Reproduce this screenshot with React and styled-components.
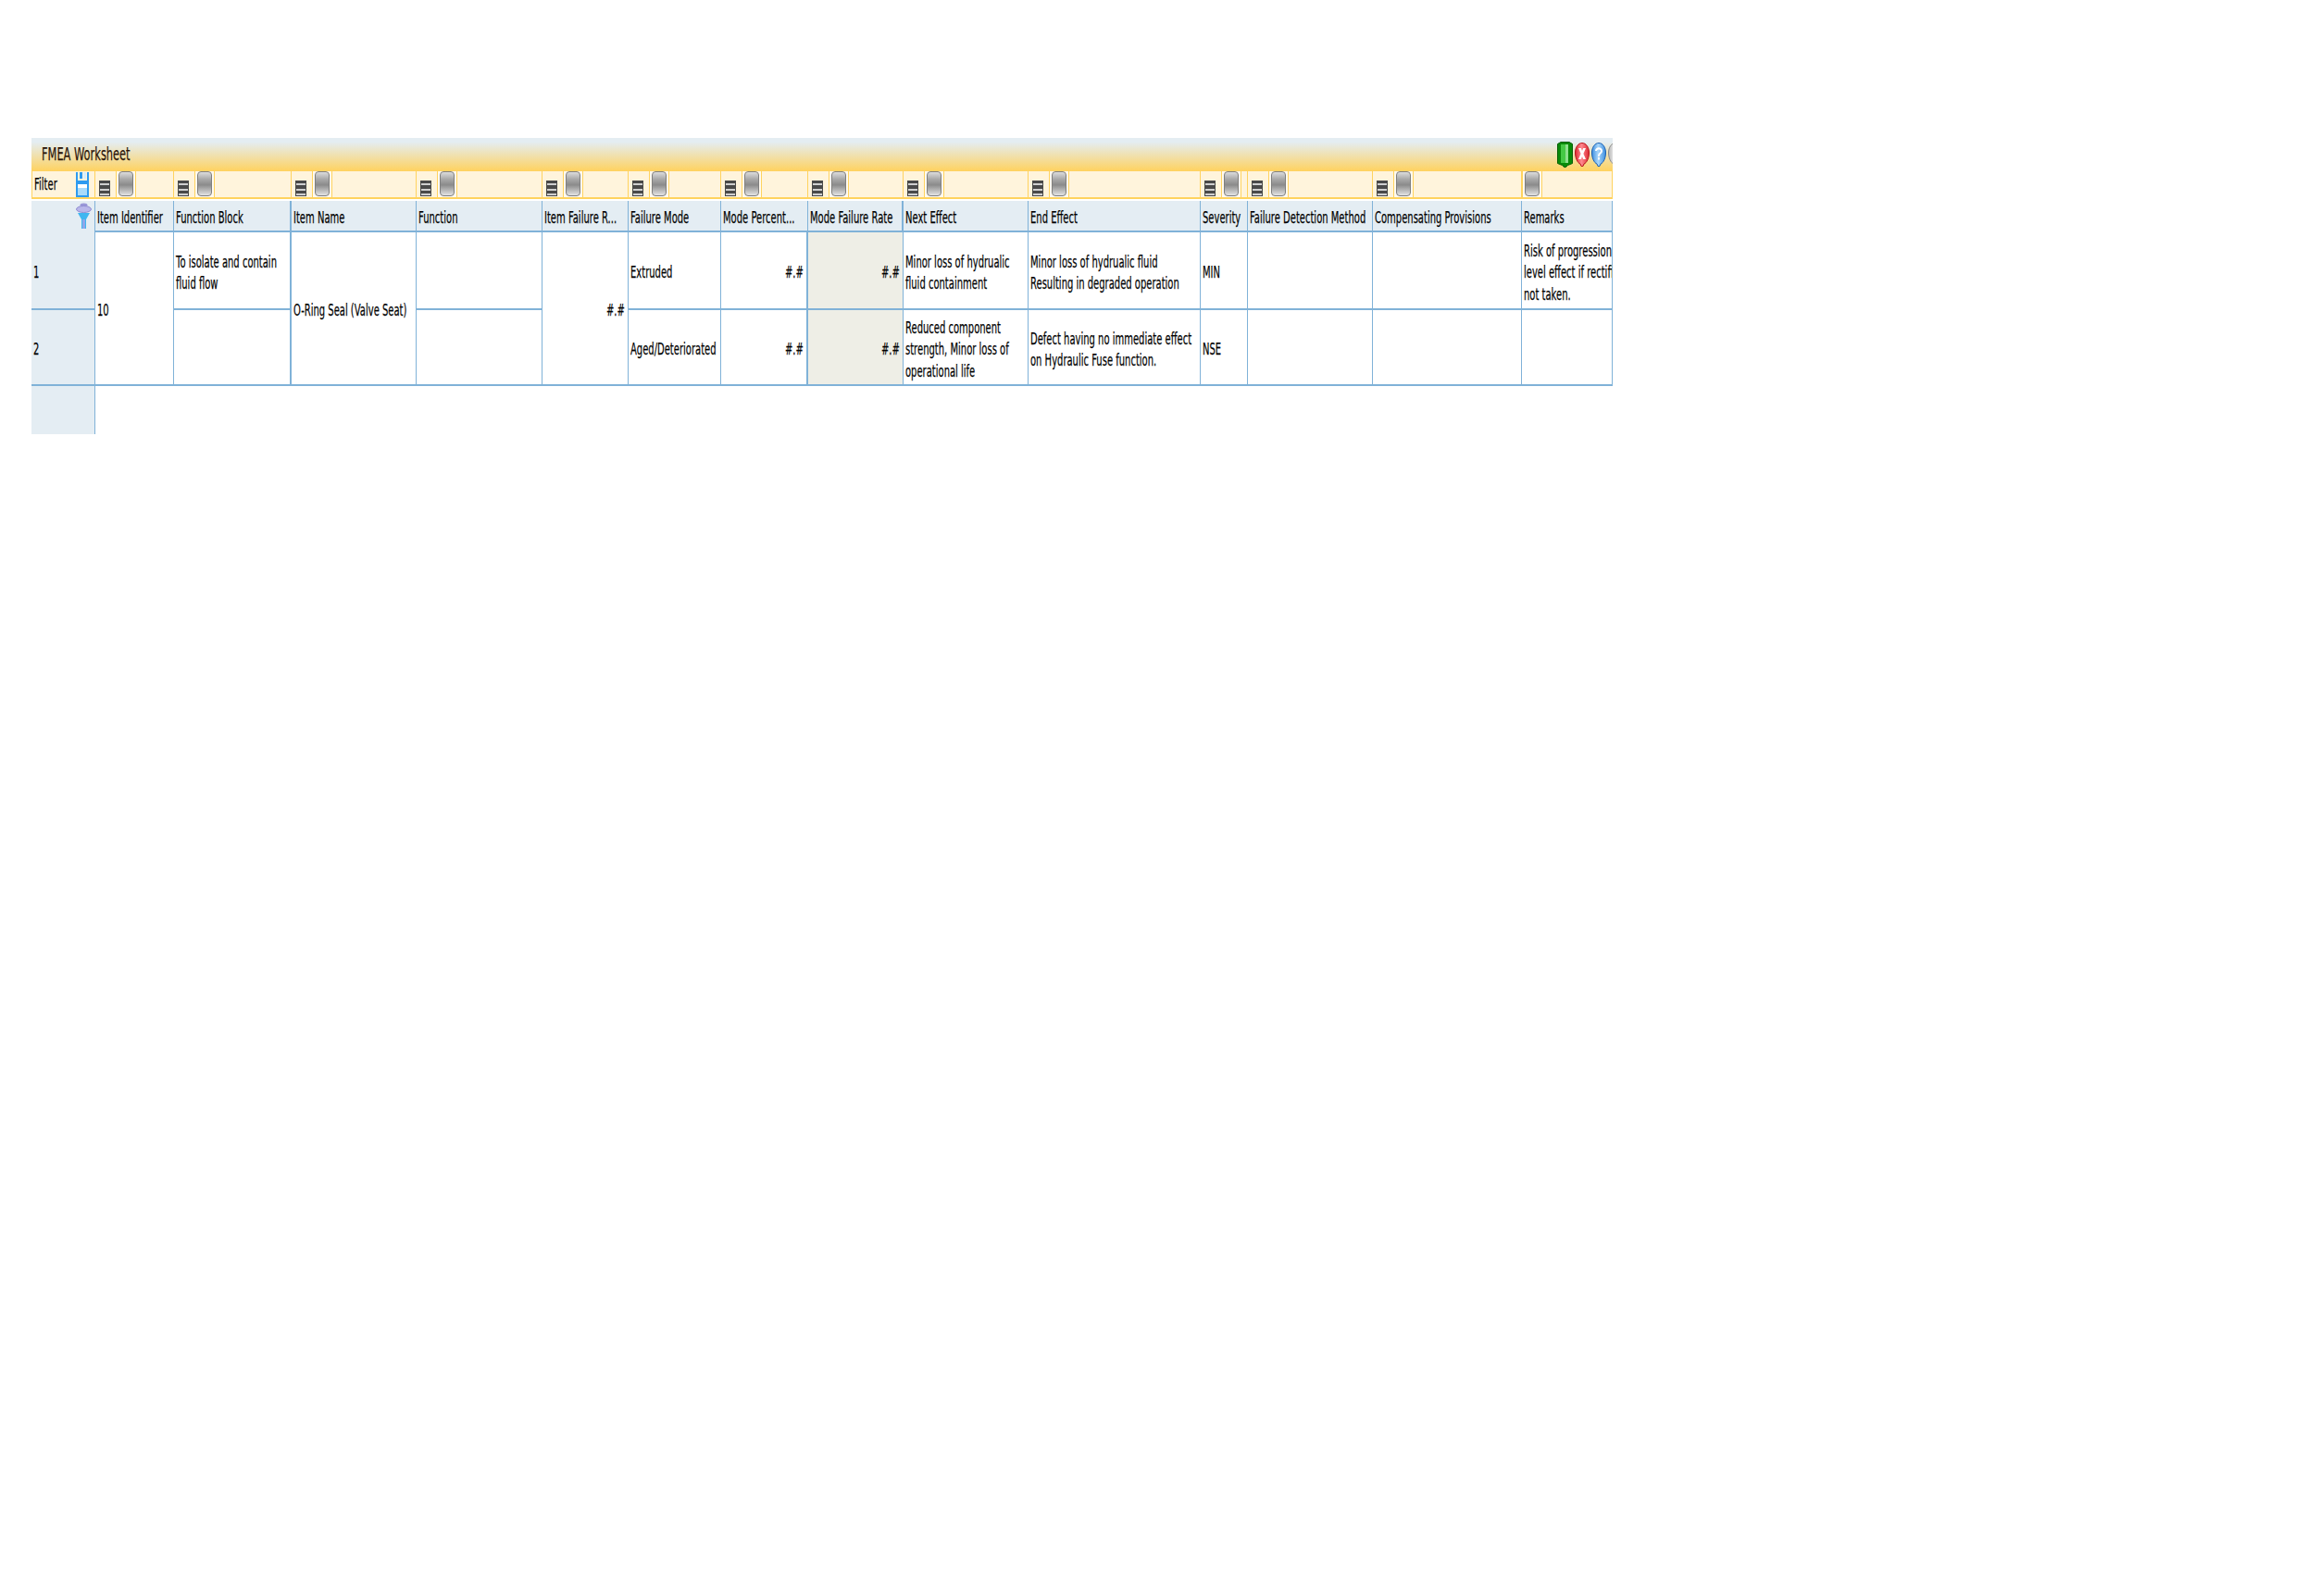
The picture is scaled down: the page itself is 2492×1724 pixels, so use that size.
import React from 'react';
import styled, { createGlobalStyle, css } from 'styled-components';

const LINE = '#80b2d8';
const PANEL = '#e4edf3';
const AMBER = '#ffd35f';

const COLUMNS = [69, 85, 127, 135, 136, 93, 100, 94, 103, 135, 186, 51, 135, 161, 98];
const template = COLUMNS.map((w) => `${w}px`).join(' ');

const HEADERS = [
  { label: 'Item Identifier' },
  { label: 'Function Block', thick: true },
  { label: 'Item Name' },
  { label: 'Function' },
  { label: 'Item Failure R...' },
  { label: 'Failure Mode' },
  { label: 'Mode Percent...' },
  { label: 'Mode Failure Rate', thick: true },
  { label: 'Next Effect' },
  { label: 'End Effect' },
  { label: 'Severity' },
  { label: 'Failure Detection Method' },
  { label: 'Compensating Provisions' },
  { label: 'Remarks', noStack: true },
];

const GlobalStyle = createGlobalStyle`
  html, body {
    margin: 0;
    background: #fff;
  }
  body {
    font-family: "DejaVu Sans", "Liberation Sans", sans-serif;
    color: #000;
  }
`;

const Page = styled.div`
  width: 2492px;
  height: 1724px;
  padding: 149px 0 0 34px;
  box-sizing: border-box;
`;

const Worksheet = styled.div`
  width: 1708px;
  overflow: hidden;
`;

const TitleBar = styled.div`
  height: 36px;
  display: flex;
  align-items: center;
  padding-left: 11px;
  background: linear-gradient(#e4edf2 0%, #e4edf2 12%, #ffd25f 100%);
`;

const Text = styled.span`
  display: inline-block;
  font-size: ${(p) => p.$size || 18}px;
  line-height: 23.5px;
  white-space: nowrap;
  -webkit-text-stroke: 0.25px currentColor;
  transform: scaleX(${(p) => p.$scale || 0.555});
  transform-origin: ${(p) => (p.$right ? 'right' : 'left')} center;
  color: ${(p) => p.$color || '#000'};
`;

const TitleActions = styled.div`
  width: 60px;
  height: 30px;
  margin-left: auto;
  display: flex;
  align-items: center;
  gap: 2px;
  overflow: hidden;
`;

const FilterRow = styled.div`
  display: grid;
  grid-template-columns: ${template};
  height: 28px;
  background: #fff4dc;
  border-bottom: 2px solid ${AMBER};
  margin-bottom: 2px;
`;

const FilterLabel = styled.div`
  display: flex;
  align-items: center;
  justify-content: space-between;
  padding: 0 6px 0 2px;
  border-left: 1px solid ${AMBER};
  border-right: 1px solid ${AMBER};
`;

const FilterCell = styled.div`
  display: flex;
  align-items: flex-end;
  border-right: 1px solid ${AMBER};
  overflow: hidden;
`;

const StackSlot = styled.div`
  width: 22px;
  padding: 0 0 1px 4px;
  box-sizing: border-box;
  display: flex;
  align-items: flex-end;
`;

const ButtonSlot = styled.div`
  width: 22px;
  height: 100%;
  background: #fffaf0;
  border-left: 1px solid ${AMBER};
  border-right: 1px solid ${AMBER};
  box-sizing: border-box;
  padding-left: 2px;
`;

const FilterButton = styled.div`
  width: 16px;
  height: 27px;
  box-sizing: border-box;
  border: 1px solid #7f7f7f;
  border-radius: 4px;
  background: linear-gradient(#dcdcdc 0%, #a9a9a9 30%, #8b8b8b 55%, #c6c6c6 85%, #e4e4e4 100%);
`;

const Grid = styled.div`
  display: grid;
  grid-template-columns: ${template};
  grid-template-rows: 34px 84px 82px 52px;
`;

const Cell = styled.div`
  display: flex;
  align-items: center;
  padding: 4px 3px 0 2px;
  min-width: 0;
  overflow: hidden;
  box-sizing: border-box;
  border-right: ${(p) => (p.$thick ? 2 : 1)}px solid ${LINE};
  border-bottom: 2px solid ${LINE};
  grid-row: span ${(p) => p.$span || 1};
  background: ${(p) => p.$bg || '#fff'};
  ${(p) =>
    p.$right &&
    css`
      justify-content: flex-end;
    `}
`;

const HeaderCell = styled(Cell)`
  background: ${PANEL};
`;

const Corner = styled.div`
  background: ${PANEL};
  border-right: 1px solid ${LINE};
  display: flex;
  justify-content: flex-end;
  padding: 2px 3px 0 0;
  box-sizing: border-box;
`;

const RowNumber = styled(Cell)`
  background: ${PANEL};
  border-right: 1px solid ${LINE};
`;

const FooterPanel = styled.div`
  background: ${PANEL};
  border-right: 1px solid ${LINE};
`;

const Save = () => (
  <svg width="14" height="27" viewBox="0 0 14 27">
    <path d="M0 0h2v9h10V0h2v27H0z" fill="#2e9bf0" />
    <rect x="4" y="0" width="3" height="7" fill="#2e9bf0" />
    <rect x="8" y="0" width="3" height="7" fill="#d7efff" />
    <rect x="2" y="13" width="10" height="4" fill="#fff" />
    <rect x="2" y="17" width="10" height="8" fill="#a9dbfb" />
  </svg>
);

const Funnel = () => (
  <svg width="17" height="29" viewBox="0 0 17 29">
    <ellipse cx="8.500" cy="2.500" rx="4" ry="2" fill="#9a97d8" />
    <ellipse cx="8.500" cy="7" rx="8" ry="3.500" fill="#b9b7ea" stroke="#8f8cd2" />
    <path d="M2 11h13l-4 7v10H6V18z" fill="#3fb6f0" />
    <path d="M7 18h3v10H7z" fill="#8ea8ea" />
  </svg>
);

const Stack = () => (
  <svg width="12" height="17" viewBox="0 0 12 17">
    <rect width="12" height="17" fill="#494949" />
    <rect x="1" y="3" width="10" height="2" fill="#cfcfcf" />
    <rect x="1" y="9" width="10" height="2" fill="#cfcfcf" />
    <rect x="1" y="14" width="10" height="2" fill="#cfcfcf" />
  </svg>
);

const Bubble = ({ id, light, dark, edge, children }) => (
  <svg width="16" height="26" viewBox="0 0 16 26" style={{ flexShrink: 0 }}>
    <defs>
      <linearGradient id={id} x1="0" x2="1" y1="0" y2="0">
        <stop offset="0" stopColor={dark} />
        <stop offset="0.45" stopColor={light} />
        <stop offset="1" stopColor={dark} />
      </linearGradient>
    </defs>
    <path d="M8 .5c4.500 0 7.500 5 7.500 10.500S13 22 10 23l-1 2.500H7L6 23C3 22 .5 16.500 .5 11S3.500 .5 8 .5z" fill={`url(#${id})`} stroke={edge} />
    {children}
  </svg>
);

const TitleIcons = () => (
  <TitleActions>
    <svg width="17" height="28" viewBox="0 0 17 28" style={{ flexShrink: 0 }}>
      <path d="M.5 2.500L4 .5h9l3.500 2v21l-5 2-2 2h-2l-2-2-5-2z" fill="#0a8a0a" stroke="#075f07" />
      <path d="M4 3h5v20H4z" fill="#45c945" />
      <path d="M9 3h3v20H9z" fill="#8fe08f" />
    </svg>
    <Bubble id="redIcon" light="#ff8a90" dark="#dc2a33" edge="#b8141c">
      <path d="M4 6h2.800L8 9l1.200-3H12l-2.600 6 2.600 6H9.200L8 15l-1.200 3H4l2.600-6z" fill="#fff" />
    </Bubble>
    <Bubble id="blueIcon" light="#a8d6fb" dark="#3f8fe0" edge="#1c62b4">
      <path d="M4 9c0-5 8-5 8 0 0 3-3 3-3 6H7c0-4 3-4 3-6 0-2-4-2-4 0z" fill="#fff" />
      <rect x="7" y="16" width="2" height="2.500" fill="#fff" />
    </Bubble>
    <Bubble id="greyIcon" light="#f2f2f2" dark="#b9b9b9" edge="#8d8d8d" />
  </TitleActions>
);

const Lines = ({ lines }) =>
  lines.map((line, i) => (
    <React.Fragment key={line}>
      {i > 0 && <br />}
      {line}
    </React.Fragment>
  ));

class App extends React.Component {
  render() {
    return (
      <Page>
        <GlobalStyle />
        <Worksheet>
          <TitleBar>
            <Text $size={19} $scale={0.6} $color="#2a1408">FMEA Worksheet</Text>
            <TitleIcons />
          </TitleBar>

          <FilterRow>
            <FilterLabel>
              <Text>Filter</Text>
              <Save />
            </FilterLabel>
            {HEADERS.map((h) => (
              <FilterCell key={h.label}>
                {h.noStack ? (
                  <ButtonSlot>
                    <FilterButton />
                  </ButtonSlot>
                ) : (
                  <>
                    <StackSlot>
                      <Stack />
                    </StackSlot>
                    <ButtonSlot>
                      <FilterButton />
                    </ButtonSlot>
                  </>
                )}
              </FilterCell>
            ))}
          </FilterRow>

          <Grid>
            <Corner>
              <Funnel />
            </Corner>
            {HEADERS.map((h) => (
              <HeaderCell key={h.label} $thick={h.thick}>
                <Text>{h.label}</Text>
              </HeaderCell>
            ))}

            <RowNumber><Text>1</Text></RowNumber>
            <Cell $span={2}><Text>10</Text></Cell>
            <Cell $thick><Text><Lines lines={['To isolate and contain', 'fluid flow']} /></Text></Cell>
            <Cell $span={2}><Text>O-Ring Seal (Valve Seat)</Text></Cell>
            <Cell />
            <Cell $span={2} $right><Text $right>#.#</Text></Cell>
            <Cell><Text>Extruded</Text></Cell>
            <Cell $right $thick><Text $right>#.#</Text></Cell>
            <Cell $right $bg="#eeeee6"><Text $right>#.#</Text></Cell>
            <Cell><Text><Lines lines={['Minor loss of hydrualic', 'fluid containment']} /></Text></Cell>
            <Cell><Text><Lines lines={['Minor loss of hydrualic fluid', 'Resulting in degraded operation']} /></Text></Cell>
            <Cell><Text>MIN</Text></Cell>
            <Cell />
            <Cell />
            <Cell><Text><Lines lines={['Risk of progression', 'level effect if rectification', 'not taken.']} /></Text></Cell>

            <RowNumber><Text>2</Text></RowNumber>
            <Cell $thick />
            <Cell />
            <Cell><Text>Aged/Deteriorated</Text></Cell>
            <Cell $right $thick><Text $right>#.#</Text></Cell>
            <Cell $right $bg="#eeeee6"><Text $right>#.#</Text></Cell>
            <Cell><Text><Lines lines={['Reduced component', 'strength, Minor loss of', 'operational life']} /></Text></Cell>
            <Cell><Text><Lines lines={['Defect having no immediate effect', 'on Hydraulic Fuse function.']} /></Text></Cell>
            <Cell><Text>NSE</Text></Cell>
            <Cell />
            <Cell />
            <Cell />

            <FooterPanel />
          </Grid>
        </Worksheet>
      </Page>
    );
  }
}

export default App;
